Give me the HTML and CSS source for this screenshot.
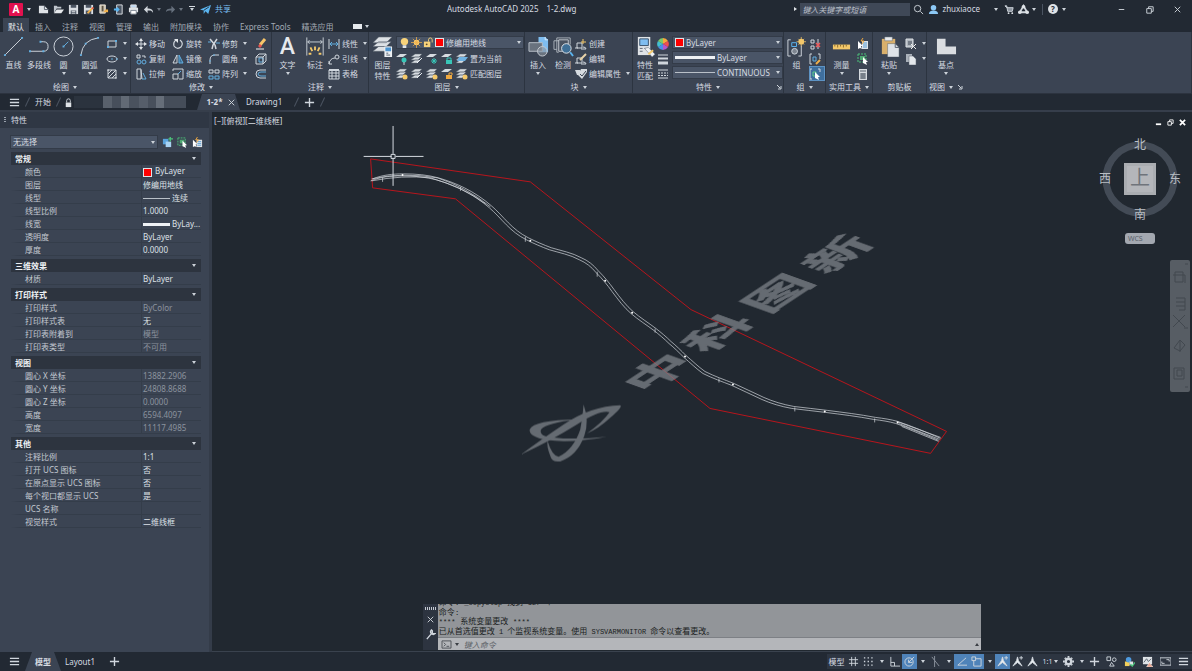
FILE: index.html
```html
<!DOCTYPE html>
<html lang="zh-CN">
<head>
<meta charset="utf-8">
<title>Autodesk AutoCAD 2025</title>
<link rel="stylesheet" href="styles.css">
</head>
<body>
<svg class="defs" aria-hidden="true">
  <symbol id="new" viewBox="0 0 12 12"><path d="M1 2h6l4 4v4H1z" fill="#dfe3e7" stroke="none"/><path d="M7 2v4h4" stroke="#59616e"/></symbol>
  <symbol id="open" viewBox="0 0 12 12"><path d="M1 10V2h3l1 1h4v2H4z" fill="#bfc5cc" stroke="none"/><path d="M4 6h8l-3 4H1z" fill="#e6e9ec" stroke="none"/></symbol>
  <symbol id="save" viewBox="0 0 12 12"><path d="M1 1h10v10H1z" fill="#d9dde2" stroke="none"/><path d="M3 1h6v3H3zM3 7h6v4H3z" fill="#4a5361" stroke="none"/><path d="M4 8h4M4 10h4" stroke="#e6e9ec"/></symbol>
  <symbol id="saveas" viewBox="0 0 12 12"><path d="M1 1h10v10H1z" fill="#d9dde2" stroke="none"/><path d="M3 1h6v3H3zM3 7h6v4H3z" fill="#4a5361" stroke="none"/><path d="M5 10l6-6" stroke="#f0b04b" stroke-width="2"/><path d="M10 4l1 1" stroke="#e55" stroke-width="2"/></symbol>
  <symbol id="webopen" viewBox="0 0 12 12"><path d="M2 1h6v9H2z" fill="#d0c6b4" stroke="#e6e0d4"/><path d="M4 2h2v6H4z" fill="#5b5344" stroke="none"/><path d="M6 9h5V6H8z" fill="#f0b04b" stroke="none"/></symbol>
  <symbol id="websave" viewBox="0 0 12 12"><path d="M4 1h6v10H4z" fill="#4c5664" stroke="#dfe3e7"/><path d="M1 6h5M4 4l2 2-2 2" stroke="#5bb5f0" stroke-width="2"/></symbol>
  <symbol id="print" viewBox="0 0 12 12"><path d="M1 4h10v5H1z" fill="#dfe3e7" stroke="none"/><path d="M3 1h6v3H3z" fill="#bcd8f2" stroke="#dfe3e7"/><path d="M3 7h6v4H3z" fill="#fff" stroke="#7b8490"/></symbol>
  <symbol id="undo" viewBox="0 0 12 12"><path d="M5 2L1 6l4 4V7c3 0 5 0 6 3 0-4-2-5-6-5z" fill="#cfd5db" stroke="none"/></symbol>
  <symbol id="redo" viewBox="0 0 12 12"><path d="M7 2l4 4-4 4V7C4 7 2 7 1 9c0-3 2-4 6-4z" fill="#66707d" stroke="none"/></symbol>
  <symbol id="plane" viewBox="0 0 12 12"><path d="M0 6l12-5-3 10-3-3-2 3V7z" fill="#5bb5f0" stroke="none"/><path d="M4 7l6-4" stroke="#26303b"/></symbol>
  <symbol id="search" viewBox="0 0 12 12"><circle cx="5" cy="5" r="3.500"/><path d="M8 8l3 3"/></symbol>
  <symbol id="user" viewBox="0 0 12 12"><circle cx="6" cy="4" r="3" fill="#8cc8f5" stroke="none"/><path d="M1 11q0-4 5-4t5 4z" fill="#8cc8f5" stroke="none"/></symbol>
  <symbol id="cart" viewBox="0 0 12 12"><path d="M1 2h2l1 6h5l1-4H3z" fill="#8d959f"/><circle cx="5" cy="10" r="1" fill="#dfe3e7" stroke="none"/><circle cx="9" cy="10" r="1" fill="#dfe3e7" stroke="none"/></symbol>
  <symbol id="appa" viewBox="0 0 12 12"><path d="M6 2L2 9h8z" stroke-width="2"/><circle cx="6" cy="3" r="2" fill="#dfe3e7" stroke="none"/><circle cx="2" cy="9" r="2" fill="#dfe3e7" stroke="none"/><circle cx="10" cy="9" r="2" fill="#dfe3e7" stroke="none"/></symbol>
  <symbol id="restore" viewBox="0 0 12 12"><path d="M3 5h5v5H3zM5 5V3h5v5H8"/></symbol>
  <symbol id="close" viewBox="0 0 12 12"><path d="M3 3l6 6M9 3l-6 6"/></symbol>
  <symbol id="min" viewBox="0 0 12 12"><path d="M3 6h6"/></symbol>
  <symbol id="menu" viewBox="0 0 12 12"><path d="M1 2.500h10M1 6h10M1 9.500h10" stroke-width="1.400"/></symbol>
  <symbol id="plus" viewBox="0 0 12 12"><path d="M6 1v10M1 6h10" stroke-width="1.500"/></symbol>
  <symbol id="lock" viewBox="0 0 12 12"><path d="M3 6h6v5H3z" fill="#dfe3e7" stroke="none"/><path d="M4 6V4q0-2 2-2t2 2v2"/></symbol>
  <symbol id="rect" viewBox="0 0 12 12"><path d="M2 3h8v6H2z"/><path d="M1 9h2M9 3h2" stroke="#62aee0" stroke-width="2"/></symbol>
  <symbol id="ell" viewBox="0 0 12 12"><ellipse cx="6" cy="6" rx="5" ry="3"/><path d="M5 6h2M11 5v2" stroke="#62aee0"/></symbol>
  <symbol id="hatch" viewBox="0 0 12 12"><path d="M2 2h8v8H2z"/><path d="M2 6l4-4M2 10l8-8M6 10l4-4M1 2h2M9 10h2"/></symbol>
  <symbol id="move" viewBox="0 0 12 12"><path d="M6 2v8M2 6h8"/><path d="M6 0l2 3H4zM6 12L4 9h4zM0 6l3-2v4zM12 6L9 4v4z" fill="#e3e7eb" stroke="none"/></symbol>
  <symbol id="rotate" viewBox="0 0 12 12"><path d="M4 2Q1 4 2 8q3 4 7 1 3-4-1-7" stroke-width="1.200"/><path d="M2 1h4v4z" fill="#e3e7eb" stroke="none"/></symbol>
  <symbol id="trim" viewBox="0 0 12 12"><path d="M2 1l5 6M9 1L5 7l-1 4M7 7l1 4" stroke-width="1.500"/><path d="M0 4h3M8 5h4" stroke="#62aee0"/></symbol>
  <symbol id="pencil" viewBox="0 0 12 12"><path d="M5 7l5-6" stroke="#f6c56a" stroke-width="3"/><path d="M3 8l2-2 2 2-2 2z" fill="#e85050" stroke="none"/><path d="M1 11h8" stroke="#f2f2f2"/></symbol>
  <symbol id="copy" viewBox="0 0 12 12"><circle cx="4" cy="9" r="2" stroke="#62aee0"/><circle cx="9" cy="9" r="2" stroke="#62aee0"/><path d="M2 2h3v3H2zM7 3h3v2" /></symbol>
  <symbol id="mirror" viewBox="0 0 12 12"><path d="M5 2v8H1z"/><path d="M7 2v8h4z" stroke="#62aee0" fill="#3c6c92"/></symbol>
  <symbol id="fillet" viewBox="0 0 12 12"><path d="M2 11V7q0-5 5-5h4"/><path d="M1 8h2M6 1v2" stroke="#62aee0"/></symbol>
  <symbol id="cube" viewBox="0 0 12 12"><path d="M1 4l3-3h7v7l-3 3H1z" /><path d="M4 5h4v4H4z" stroke="#62aee0"/><path d="M8 4l3-3M1 4h7v7"/></symbol>
  <symbol id="stretch" viewBox="0 0 12 12"><path d="M2 1h4v10H2zM7 11L6 2"/><path d="M8 5l3 6H7" stroke="#62aee0"/></symbol>
  <symbol id="scale" viewBox="0 0 12 12"><path d="M1 3V1h10v10H7"/><path d="M1 6h5v5H1z"/><path d="M6 6l3-3" stroke="#62aee0"/></symbol>
  <symbol id="array" viewBox="0 0 12 12"><path d="M1 2h4v3H1zM7 2h4v3H7z"/><path d="M1 8h4v3H1zM7 8h4v3H7z" stroke="#62aee0"/></symbol>
  <symbol id="offset" viewBox="0 0 12 12"><path d="M11 2H5Q1 2 1 6t4 4h6"/><path d="M11 4H6Q3 4 3 6t3 2h5" stroke="#62aee0"/></symbol>
  <symbol id="linear" viewBox="0 0 12 12"><path d="M1 1v10M11 1v10"/><path d="M2 6h8M4 4L2 6l2 2M8 4l2 2-2 2" stroke="#62aee0"/></symbol>
  <symbol id="leader" viewBox="0 0 12 12"><path d="M1 11q1-6 6-6"/><circle cx="9" cy="4" r="2"/><path d="M1 8v3h3" /></symbol>
  <symbol id="table" viewBox="0 0 12 12"><path d="M1 2h10v9H1zM1 5h10M1 8h10M4 2v9M8 2v9"/><path d="M1 2h10" stroke-width="2"/></symbol>
  <symbol id="lay" viewBox="0 0 12 12"><path d="M4 1h7L8 4H0zM4 4h6L7 7H0zM4 7h5L6 10H0z" fill="#d6dbe0" stroke="#59626f" stroke-width=".5"/></symbol>
  <symbol id="lay1" viewBox="0 0 12 12"><path d="M4 1h7L7 4H0z" fill="#d6dbe0" stroke="none"/><circle cx="8" cy="7" r="2.500" fill="#38c6b8" stroke="none"/><path d="M8 9v3"/></symbol>
  <symbol id="lay2" viewBox="0 0 12 12"><use href="#lay"/><path d="M6 10l5-5" stroke="#e8edf2"/></symbol>
  <symbol id="lay3" viewBox="0 0 12 12"><path d="M4 1h7L7 4H0z" fill="#d6dbe0" stroke="none"/><path d="M5 8h6M8 5v6M6 6l4 4M10 6l-4 4" stroke="#38c6b8"/></symbol>
  <symbol id="lay4" viewBox="0 0 12 12"><path d="M4 1h7L7 4H0z" fill="#d6dbe0" stroke="none"/><path d="M5 7h6v4H5z" fill="#38c6b8" stroke="none"/><path d="M6 7V5h4v2" stroke="#38c6b8"/></symbol>
  <symbol id="lay5" viewBox="0 0 12 12"><use href="#lay"/><path d="M3 4h9l-3 4H1z" fill="#6fb2e2" stroke="none"/></symbol>
  <symbol id="lay6" viewBox="0 0 12 12"><use href="#lay"/><circle cx="9" cy="9" r="2.500" fill="#f3c86a" stroke="none"/></symbol>
  <symbol id="lay7" viewBox="0 0 12 12"><path d="M4 1h7L7 4H0z" fill="#d6dbe0" stroke="none"/><path d="M5 7h6v4H5z" fill="#f0a940" stroke="none"/><path d="M8 7V5h3v2" stroke="#f0a940"/></symbol>
  <symbol id="bulb" viewBox="0 0 12 12"><circle cx="6" cy="5" r="4" fill="#f7d27a" stroke="none"/><path d="M4 9h4v3H4z" fill="#dfe3e7" stroke="none"/></symbol>
  <symbol id="sun" viewBox="0 0 12 12"><circle cx="6" cy="6" r="3" fill="#f7cd74" stroke="none"/><path d="M6 0v12M0 6h12M2 2l8 8M10 2l-8 8" stroke="#f0b04b" stroke-width=".8"/></symbol>
  <symbol id="unlock" viewBox="0 0 12 12"><path d="M1 5h7v6H1z" fill="#f7d27a" stroke="none"/><path d="M6 5V3q0-2 2-2t2 2v3" stroke="#f7d27a"/><circle cx="4" cy="8" r="1" fill="#59482a" stroke="none"/></symbol>
  <symbol id="blk" viewBox="0 0 12 12"><path d="M2 5h5v5H2zM0 10h3M8 9q3 0 3 2H6"/><path d="M8 1v5M6 4h5" stroke="#f3c86a"/></symbol>
  <symbol id="blk2" viewBox="0 0 12 12"><path d="M2 5h5v5H2zM0 10h3M8 9q3 0 3 2H6"/><path d="M5 7l6-6" stroke="#e8d2a8" stroke-width="2"/></symbol>
  <symbol id="blk3" viewBox="0 0 12 12"><path d="M0 2h5v5H2zM6 1h6v3L7 11 3 7z" fill="#d6dbe0" stroke="none"/><path d="M5 6l2 2 4-5" stroke="#3b4453"/></symbol>
  <symbol id="wheel" viewBox="0 0 12 12"><g stroke="none"><path d="M6 6V0a6 6 0 0 1 5 3z" fill="#f7a93b"/><path d="M6 6l5-3a6 6 0 0 1 0 6z" fill="#ef4f4f"/><path d="M6 6l5 3a6 6 0 0 1-5 3z" fill="#b556c9"/><path d="M6 6v6a6 6 0 0 1-5-3z" fill="#4b8fe8"/><path d="M6 6L1 9a6 6 0 0 1 0-6z" fill="#41bfd0"/><path d="M6 6L1 3a6 6 0 0 1 5-3z" fill="#7cc96a"/></g></symbol>
  <symbol id="weights" viewBox="0 0 12 12"><path d="M1 2h10" /><path d="M1 5.500h10" stroke-width="2"/><path d="M1 10h10" stroke-width="3"/></symbol>
  <symbol id="types" viewBox="0 0 12 12"><path d="M1 2h10M1 10h10"/><path d="M1 5h10M1 7.500h10" stroke-dasharray="2 1"/></symbol>
  <symbol id="ungroup" viewBox="0 0 12 12"><path d="M2 2h3v3H2zM2 8h3v3H2zM9 1v10"/><path d="M7 5l4 4M11 5L7 9" stroke="#ef5a5a" stroke-width="1.500"/></symbol>
  <symbol id="groupedit" viewBox="0 0 12 12"><path d="M3 1H1v10h2M9 1h2v5"/><path d="M4 4h3v4H4z" stroke="#62aee0"/><path d="M7 11l4-4" stroke="#f0b04b" stroke-width="2"/></symbol>
  <symbol id="groupsel" viewBox="0 0 12 12"><path d="M3 1H1v10h2M9 1h2v3"/><path d="M4 4h3v4H4z" stroke="#5fcf87"/><path d="M6 4l5 5H9l1 3-2-1-2-1z" fill="#fff" stroke="none"/></symbol>
  <symbol id="qsel" viewBox="0 0 12 12"><path d="M5 3h6v8H5z" fill="#dfe3e7" stroke="none"/><path d="M6 5h4M6 7h4M6 9h4" stroke="#5a9fd6"/><path d="M1 3l5 5H4l1 3-2-1-2 1z" fill="#fff" stroke="none"/><path d="M6 0L4 3h3L5 6" stroke="#f0a940"/></symbol>
  <symbol id="selall" viewBox="0 0 12 12"><path d="M1 1h8v8H1z" stroke="#4cc27a" stroke-dasharray="2 1"/><path d="M3 3h5v4H3z" fill="#4fa872" stroke="none"/><path d="M6 4l5 5H9l1 3-2-1-2-1z" fill="#fff" stroke="none"/></symbol>
  <symbol id="pick" viewBox="0 0 12 12"><path d="M1 2h6v6H1z" fill="#5aa3dc" stroke="none"/><path d="M4 5h6v6H4z" fill="#a8d2f2" stroke="none"/><path d="M9 0v5M7 2h5" stroke="#4cc27a" stroke-width="1.500"/></symbol>
  <symbol id="calc" viewBox="0 0 12 12"><path d="M2 1h8v11H2z" fill="#d6dbe0" stroke="none"/><path d="M3 3h6M3 6h6M3 8h6M3 10h6M5 5v6M7 5v6" stroke="#59626f"/></symbol>
  <symbol id="cut" viewBox="0 0 12 12"><path d="M1 1h7v8H1z" fill="#aeb5bd" stroke="#dfe3e7"/><path d="M3 4h4M3 6h4" stroke="#3b4453"/><path d="M6 6l5 5M11 6l-5 5" stroke="#eee"/></symbol>
  <symbol id="pages" viewBox="0 0 12 12"><path d="M1 1h6v8H1z" fill="#aab1ba" stroke="none"/><path d="M4 3h4l3 3v6H4z" fill="#e3e7eb" stroke="#59626f" stroke-width=".5"/></symbol>
  <symbol id="sgrid" viewBox="0 0 12 12"><path d="M4 1v10M8 1v10M1 4h10M1 8h10"/></symbol>
  <symbol id="sdots" viewBox="0 0 12 12"><path d="M1 2h10M1 6h10M1 10h10" stroke-dasharray="1.500 2.500" stroke-width="1.500"/></symbol>
  <symbol id="ortho" viewBox="0 0 12 12"><path d="M2 1v10h10M2 7h4v4"/></symbol>
  <symbol id="polar" viewBox="0 0 12 12"><circle cx="5.500" cy="6.500" r="4.500"/><path d="M5 7l6-6M5 7h4M5 4v3"/></symbol>
  <symbol id="iso" viewBox="0 0 12 12"><path d="M2 1l8 10M5 5V0M5 5v7" stroke="#8e96a1"/></symbol>
  <symbol id="track" viewBox="0 0 12 12"><path d="M11 2L2 10h10"/></symbol>
  <symbol id="snap" viewBox="0 0 12 12"><path d="M3 3h8v8H3z"/><path d="M1 1h4v4H1z" fill="#5184b8"/></symbol>
  <symbol id="ann" viewBox="0 0 12 12"><path d="M6 1l1 4 4 6-5-4-5 4 4-6z" fill="#eef1f4"/></symbol>
  <symbol id="ann2" viewBox="0 0 12 12"><use href="#ann"/><path d="M8 2h4M10 0v4"/></symbol>
  <symbol id="gear" viewBox="0 0 12 12"><circle cx="6" cy="6" r="3" stroke-width="2.500"/><path d="M6 0v2M6 10v2M0 6h2M10 6h2M2 2l1 1M9 9l1 1M10 2L9 3M3 9l-1 1" stroke-width="2"/></symbol>
  <symbol id="shapes" viewBox="0 0 12 12"><path d="M1 1h4v4H1zM4 11l2-4 3 4z"/><circle cx="9" cy="4" r="2"/></symbol>
  <symbol id="perf" viewBox="0 0 12 12"><path d="M1 6h5v5H1z" fill="#f1cf5a" stroke="none"/><circle cx="5" cy="4" r="3" fill="#4e9be0" stroke="none"/><path d="M6 6h4v4H6z" fill="#dfe3e7" stroke="none"/><path d="M7 9l2 2 3-4" stroke="#4cc27a" stroke-width="1.500"/></symbol>
  <symbol id="pic" viewBox="0 0 12 12"><path d="M1 1h10v8H1z" fill="#dfe3e7" stroke="none"/><path d="M2 7l3-4 2 3 3-3" stroke="#59626f"/><path d="M5 12l3-5 4 5z" fill="#e7a28c" stroke="#fff" stroke-width=".5"/></symbol>
  <symbol id="full" viewBox="0 0 12 12"><path d="M0 2h12v8H0z"/><path d="M7 4h3v2M5 8H2V6"/></symbol>
  <symbol id="wrench" viewBox="0 0 12 12"><path d="M2 11l5-6M7 1q-2 2 0 4t4 0l-3 0V2z" stroke-width="1.500"/></symbol>
  <symbol id="corner" viewBox="0 0 6 6"><path d="M1 1l3 3M5 2v3H2"/></symbol>
</svg>

<div class="app">
<header class="titlebar">
  <div class="quick">
    <button class="logo" aria-label="应用程序菜单">A</button><i class="dn"></i>
    <button aria-label="新建"><svg class="i"><use href="#new"/></svg></button>
    <button aria-label="打开"><svg class="i"><use href="#open"/></svg></button>
    <button aria-label="保存"><svg class="i"><use href="#save"/></svg></button>
    <button aria-label="另存为"><svg class="i"><use href="#saveas"/></svg></button>
    <button aria-label="从 Web 打开"><svg class="i"><use href="#webopen"/></svg></button>
    <button aria-label="保存到 Web"><svg class="i"><use href="#websave"/></svg></button>
    <button aria-label="打印"><svg class="i"><use href="#print"/></svg></button>
    <button class="hist" aria-label="放弃"><svg class="i"><use href="#undo"/></svg><i class="dn dim"></i></button>
    <button class="hist" aria-label="重做"><svg class="i"><use href="#redo"/></svg><i class="dn dim"></i></button>
    <i class="dn more"></i>
    <button class="share"><svg class="i"><use href="#plane"/></svg>共享</button>
  </div>
  <div class="doc"><span>Autodesk AutoCAD 2025</span><span>1-2.dwg</span></div>
  <div class="tools">
    <i class="rt"></i>
    <input class="find" type="text" placeholder="键入关键字或短语" aria-label="搜索">
    <button aria-label="搜索"><svg class="i"><use href="#search"/></svg></button>
    <button class="user"><svg class="i"><use href="#user"/></svg>zhuxiaoce</button><i class="dn"></i>
    <button aria-label="商店"><svg class="i"><use href="#cart"/></svg></button>
    <button aria-label="应用"><svg class="i"><use href="#appa"/></svg></button><i class="dn"></i>
    <i class="vr"></i>
    <button class="help" aria-label="帮助">?</button><i class="dn"></i>
    <div class="win">
      <button aria-label="最小化"><svg class="i"><use href="#min"/></svg></button>
      <button aria-label="还原"><svg class="i"><use href="#restore"/></svg></button>
      <button aria-label="关闭"><svg class="i"><use href="#close"/></svg></button>
    </div>
  </div>
</header>

<nav class="tabs">
  <button class="on">默认</button><button>插入</button><button>注释</button><button>视图</button><button>管理</button><button>输出</button><button>附加模块</button><button>协作</button><button>Express Tools</button><button>精选应用</button>
  <button class="collapse" aria-label="最小化面板"><b></b><i class="dn"></i></button>
</nav>

<section class="ribbon">
  <div class="panel">
    <div class="body draw">
      <button class="big"><svg viewBox="0 0 22 22"><path d="M2 20L20 2"/><path d="M1 19h2v2H1zM19 1h2v2h-2z" fill="#62aee0" stroke="none"/></svg>直线</button>
      <button class="big"><svg viewBox="0 0 22 22"><path d="M1 16h14q5 0 5-5t-5-5h-3"/><path d="M0 15h2v2H0zM11 5h2v2h-2zM14 15h2v2h-2z" fill="#62aee0" stroke="none"/></svg>多段线</button>
      <button class="big"><svg viewBox="0 0 22 22"><circle cx="11" cy="11" r="10"/><path d="M11 11l5-5" stroke="#62aee0"/><path d="M10 10h2v2h-2z" fill="#62aee0" stroke="none"/></svg>圆<i class="dn"></i></button>
      <button class="big"><svg viewBox="0 0 22 22"><path d="M2 20Q4 4 20 2"/><path d="M1 19h2v2H1zM6 7h2v2H6zM19 1h2v2h-2z" fill="#62aee0" stroke="none"/></svg>圆弧<i class="dn"></i></button>
      <div class="col">
        <button class="sb" aria-label="矩形"><svg class="i"><use href="#rect"/></svg><i class="dn"></i></button>
        <button class="sb" aria-label="椭圆"><svg class="i"><use href="#ell"/></svg><i class="dn"></i></button>
        <button class="sb" aria-label="图案填充"><svg class="i"><use href="#hatch"/></svg><i class="dn"></i></button>
      </div>
    </div>
    <div class="cap">绘图<i class="dn"></i></div>
  </div>
  <div class="panel">
    <div class="body modify">
      <div class="col">
        <button class="sb"><svg class="i"><use href="#move"/></svg>移动</button>
        <button class="sb"><svg class="i"><use href="#copy"/></svg>复制</button>
        <button class="sb"><svg class="i"><use href="#stretch"/></svg>拉伸</button>
      </div>
      <div class="col">
        <button class="sb"><svg class="i"><use href="#rotate"/></svg>旋转</button>
        <button class="sb"><svg class="i"><use href="#mirror"/></svg>镜像</button>
        <button class="sb"><svg class="i"><use href="#scale"/></svg>缩放</button>
      </div>
      <div class="col">
        <button class="sb"><svg class="i"><use href="#trim"/></svg>修剪<i class="dn"></i></button>
        <button class="sb"><svg class="i"><use href="#fillet"/></svg>圆角<i class="dn"></i></button>
        <button class="sb"><svg class="i"><use href="#array"/></svg>阵列<i class="dn"></i></button>
      </div>
      <div class="col">
        <button class="sb" aria-label="删除"><svg class="i"><use href="#pencil"/></svg></button>
        <button class="sb" aria-label="分解"><svg class="i"><use href="#cube"/></svg></button>
        <button class="sb" aria-label="偏移"><svg class="i"><use href="#offset"/></svg></button>
      </div>
    </div>
    <div class="cap">修改<i class="dn"></i></div>
  </div>
  <div class="panel">
    <div class="body annot">
      <button class="big"><span class="glyph">A</span>文字<i class="dn"></i></button>
      <button class="big"><svg viewBox="0 0 22 22"><path d="M2 1v20M20 1v20M3 6h16M5 4L3 6l2 2M17 4l2 2-2 2"/><path d="M11 11v4M6 12l2 4M16 12l-2 4M4 19h3M15 19h3" stroke="#f3c86a" stroke-width="2"/></svg>标注</button>
      <div class="col">
        <button class="sb"><svg class="i"><use href="#linear"/></svg>线性<i class="dn"></i></button>
        <button class="sb"><svg class="i"><use href="#leader"/></svg>引线<i class="dn"></i></button>
        <button class="sb"><svg class="i"><use href="#table"/></svg>表格</button>
      </div>
    </div>
    <div class="cap">注释<i class="dn"></i></div>
  </div>
  <div class="panel">
    <div class="body layers">
      <button class="big"><svg viewBox="0 0 22 22"><g fill="#dde1e5" stroke="#59626f" stroke-width=".6"><path d="M7 1h14l-6 6H1zM7 6h13l-5 5H1zM7 11h12l-4 5H1z"/></g><path d="M13 11h8v11h-8z" fill="#eef1f4" stroke="none"/><path d="M14 12h6v4h-6z" fill="#4b93cf" stroke="none"/><path d="M15 18h2M15 20h4" stroke="#59626f"/></svg>图层<br>特性</button>
      <div class="col">
        <div class="combo lcombo"><svg class="i"><use href="#bulb"/></svg><svg class="i"><use href="#sun"/></svg><svg class="i"><use href="#unlock"/></svg><b class="sw"></b><select aria-label="图层"><option>修编用地线</option></select><i class="dn"></i></div>
        <div class="lrow">
          <button aria-label="关"><svg class="i"><use href="#lay1"/></svg></button><button aria-label="隔离"><svg class="i"><use href="#lay2"/></svg></button><button aria-label="冻结"><svg class="i"><use href="#lay3"/></svg></button><button aria-label="锁定"><svg class="i"><use href="#lay4"/></svg></button><button class="sb"><svg class="i"><use href="#lay5"/></svg>置为当前</button>
        </div>
        <div class="lrow">
          <button aria-label="打开所有图层"><svg class="i"><use href="#lay6"/></svg></button><button aria-label="取消隔离"><svg class="i"><use href="#lay2"/></svg></button><button aria-label="解冻"><svg class="i"><use href="#lay6"/></svg></button><button aria-label="解锁"><svg class="i"><use href="#lay7"/></svg></button><button class="sb"><svg class="i"><use href="#lay6"/></svg>匹配图层</button>
        </div>
      </div>
    </div>
    <div class="cap">图层<i class="dn"></i></div>
  </div>
  <div class="panel">
    <div class="body block">
      <button class="big"><svg viewBox="0 0 22 22"><path d="M11 1h7l3 3v13H11z" fill="#7fbdf0" stroke="none"/><path d="M18 1v3h3" stroke="#d9ecfb"/><path d="M1 7h14v9H1z" fill="#69727e" stroke="#b9c0c8"/><circle cx="15" cy="16" r="5" fill="#8b939d" fill-opacity=".6" stroke="#c4cad1"/></svg>插入<i class="dn"></i></button>
      <button class="big"><svg viewBox="0 0 22 22"><path d="M4 14H1V5h13M6 17H4V2h14v7" stroke="#aab1ba"/><path d="M6 4h10v12H6z" fill="#4a5361" stroke="#c4cad1"/><circle cx="14" cy="13" r="5" fill="#3f6f96" stroke="#dfe3e7"/><path d="M18 17l3 4" stroke="#5bb5f0" stroke-width="2"/></svg>检测</button>
      <div class="col">
        <button class="sb"><svg class="i"><use href="#blk"/></svg>创建</button>
        <button class="sb"><svg class="i"><use href="#blk2"/></svg>编辑</button>
        <button class="sb"><svg class="i"><use href="#blk3"/></svg>编辑属性<i class="dn"></i></button>
      </div>
    </div>
    <div class="cap">块<i class="dn"></i></div>
  </div>
  <div class="panel">
    <div class="body props">
      <button class="big"><svg viewBox="0 0 22 22"><path d="M3 1h13v19H3z" fill="#dfe3e7" stroke="none"/><path d="M5 3h9v7H5z" fill="#7fbdf0" stroke="#39516a"/><path d="M5 13h3M5 16h3M10 13h3" stroke="#59626f"/><path d="M10 13l4-1 7 7-3 3z" fill="#eef1f4" stroke="#59626f" stroke-width=".5"/><path d="M14 19l5-4" stroke="#f3c86a" stroke-width="2"/></svg>特性<br>匹配</button>
      <div class="col">
        <button class="sb" aria-label="对象颜色"><svg class="i"><use href="#wheel"/></svg></button>
        <button class="sb" aria-label="线宽"><svg class="i"><use href="#weights"/></svg></button>
        <button class="sb" aria-label="线型"><svg class="i"><use href="#types"/></svg></button>
      </div>
      <div class="col">
        <div class="combo"><b class="sw"></b><select aria-label="对象颜色"><option>ByLayer</option></select><i class="dn"></i></div>
        <div class="combo"><b class="ln thick"></b><select aria-label="线宽"><option>ByLayer</option></select><i class="dn"></i></div>
        <div class="combo"><b class="ln"></b><select aria-label="线型"><option>CONTINUOUS</option></select><i class="dn"></i></div>
      </div>
    </div>
    <div class="cap">特性<i class="dn"></i><svg class="corner"><use href="#corner"/></svg></div>
  </div>
  <div class="panel">
    <div class="body group">
      <button class="big"><svg viewBox="0 0 22 22"><path d="M5 4H2v17h3M13 21h3V10"/><path d="M6 7h5v4H6z" stroke="#5bb5f0"/><circle cx="9" cy="16" r="3" fill="#7d8590"/><circle cx="16" cy="6" r="3" fill="#f3c86a" stroke="none"/><path d="M16 1v10M11 6h10M13 3l6 6M19 3l-6 6" stroke="#f3c86a" stroke-width=".8"/></svg>组</button>
      <div class="col">
        <button class="sb" aria-label="解除编组"><svg class="i"><use href="#ungroup"/></svg></button>
        <button class="sb" aria-label="组编辑"><svg class="i"><use href="#groupedit"/></svg></button>
        <button class="sb lit" aria-label="启用组选择"><svg class="i"><use href="#groupsel"/></svg></button>
      </div>
    </div>
    <div class="cap">组<i class="dn"></i></div>
  </div>
  <div class="panel">
    <div class="body util">
      <button class="big"><svg viewBox="0 0 22 22"><path d="M2 9h18v5H2z" fill="#f3c86a" stroke="none"/><path d="M4 9v2M7 9v3M10 9v2M13 9v3M16 9v2" stroke="#8a6a2a"/></svg>测量<i class="dn"></i></button>
      <div class="col">
        <button class="sb" aria-label="快速选择"><svg class="i"><use href="#qsel"/></svg></button>
        <button class="sb" aria-label="全部选择"><svg class="i"><use href="#selall"/></svg></button>
        <button class="sb" aria-label="计算器"><svg class="i"><use href="#calc"/></svg></button>
      </div>
    </div>
    <div class="cap">实用工具<i class="dn"></i></div>
  </div>
  <div class="panel">
    <div class="body clip">
      <button class="big"><svg viewBox="0 0 22 22"><path d="M3 3h14v16H3z" fill="#d9b06c" stroke="none"/><path d="M6 1h8v4H6z" fill="#e8ebee" stroke="#59626f" stroke-width=".5"/><path d="M9 8h8l4 4v10H9z" fill="#dfe3e7" stroke="#59626f" stroke-width=".5"/><path d="M17 8v4h4" stroke="#59626f"/></svg>粘贴<i class="dn"></i></button>
      <div class="col">
        <button class="sb" aria-label="剪切"><svg class="i"><use href="#cut"/></svg><i class="dn"></i></button>
        <button class="sb" aria-label="复制"><svg class="i"><use href="#pages"/></svg><i class="dn"></i></button>
      </div>
    </div>
    <div class="cap">剪贴板</div>
  </div>
  <div class="panel last">
    <div class="body view">
      <button class="big"><svg viewBox="0 0 22 22"><path d="M1 3h9v8h11v8H1z" fill="#dadde1" stroke="none"/></svg>基点<i class="dn"></i></button>
    </div>
    <div class="cap">视图<i class="dn"></i><svg class="cn"><use href="#corner"/></svg></div>
  </div>
</section>

<nav class="files">
  <button aria-label="菜单"><svg class="i"><use href="#menu"/></svg></button><i class="sl"></i>
  <button class="start">开始</button><i class="sl"></i>
  <button class="masked" aria-label="已锁定图形"><svg class="i"><use href="#lock"/></svg><b></b></button>
  <button class="cur"><span>1-2*</span><svg class="i"><use href="#close"/></svg></button>
  <button class="dwg">Drawing1</button><i class="sl"></i>
  <button aria-label="新图形"><svg class="i"><use href="#plus"/></svg></button><i class="sl"></i>
</nav>

<main class="work">
  <aside class="side">
    <h2><i class="grip"></i>特性</h2>
    <div class="pick">
      <div class="combo"><select aria-label="选择"><option>无选择</option></select><i class="dn"></i></div>
      <button aria-label="切换选择"><svg class="i"><use href="#pick"/></svg></button>
      <button aria-label="选择对象"><svg class="i"><use href="#selall"/></svg></button>
      <button aria-label="快速选择"><svg class="i"><use href="#qsel"/></svg></button>
    </div>
    <section class="grp"><h3>常规<i class="dn"></i></h3>
      <table>
        <tr><th>颜色</th><td><b class="sw"></b> ByLayer</td></tr>
        <tr><th>图层</th><td>修编用地线</td></tr>
        <tr><th>线型</th><td><b class="ln"></b>连续</td></tr>
        <tr><th>线型比例</th><td>1.0000</td></tr>
        <tr><th>线宽</th><td><b class="ln thick"></b>ByLay...</td></tr>
        <tr><th>透明度</th><td>ByLayer</td></tr>
        <tr><th>厚度</th><td>0.0000</td></tr>
      </table></section>
    <section class="grp"><h3>三维效果<i class="dn"></i></h3>
      <table><tr><th>材质</th><td>ByLayer</td></tr></table></section>
    <section class="grp"><h3>打印样式<i class="dn"></i></h3>
      <table>
        <tr><th>打印样式</th><td class="off">ByColor</td></tr>
        <tr><th>打印样式表</th><td>无</td></tr>
        <tr><th>打印表附着到</th><td class="off">模型</td></tr>
        <tr><th>打印表类型</th><td class="off">不可用</td></tr>
      </table></section>
    <section class="grp"><h3>视图<i class="dn"></i></h3>
      <table>
        <tr><th>圆心 X 坐标</th><td class="off">13882.2906</td></tr>
        <tr><th>圆心 Y 坐标</th><td class="off">24808.8688</td></tr>
        <tr><th>圆心 Z 坐标</th><td class="off">0.0000</td></tr>
        <tr><th>高度</th><td class="off">6594.4097</td></tr>
        <tr><th>宽度</th><td class="off">11117.4985</td></tr>
      </table></section>
    <section class="grp"><h3>其他<i class="dn"></i></h3>
      <table>
        <tr><th>注释比例</th><td>1:1</td></tr>
        <tr><th>打开 UCS 图标</th><td>否</td></tr>
        <tr><th>在原点显示 UCS 图标</th><td>否</td></tr>
        <tr><th>每个视口都显示 UCS</th><td>是</td></tr>
        <tr><th>UCS 名称</th><td></td></tr>
        <tr><th>视觉样式</th><td>二维线框</td></tr>
      </table></section>
  </aside>

  <div class="canvas">
    <svg class="scene" viewBox="212 112 980 540">
      <path class="bound" d="M370 159L530 182L691 310L947 432L931 454L710 409L455 199L372 188Z"/>
      <defs>
        <path id="road" d="M371 180C381 176 391 175 402 175C415 175 426 176 437 179C447 182 455 185 463 189C473 194 482 200 490 207C496 212 501 218 507 224C513 230 519 235 527 239C535 243 542 246 550 249C560 252 571 254 580 259C587 262 592 266 597 272C603 278 608 284 613 291C619 299 625 307 632 313C639 319 647 324 655 330C660 334 665 338 670 343C675 347 680 352 685 357C691 362 697 368 704 373C714 378 723 381 733 385C743 390 753 394 763 399C772 403 782 406 793 408C804 409 816 411 827 412C843 414 859 416 875 419C883 420 890 421 897 423C912 428 926 434 940 440"/>
      </defs>
      <g class="road"><use href="#road" x="1" y="-1"/><use href="#road" x="-1" y="1"/>
        <path d="M371 179Q402 172 437 178Q465 187 490 207M371 181Q402 175 430 178Q462 187 485 204M897 422L941 438M899 424L940 440M902 427L939 442" />
        <path d="M382 178v4M460 187v4M525 237v5M597 272v5M655 329v4M719 379v4M795 408v4M875 419v4"/></g>
      <g class="pin"><circle cx="402" cy="175" r="1"/><circle cx="530" cy="241" r="1"/><circle cx="605" cy="281" r="1"/><circle cx="632" cy="313" r="1"/><circle cx="685" cy="357" r="1"/><circle cx="733" cy="385" r="1"/><circle cx="825" cy="412" r="1"/><circle cx="898" cy="423" r="1"/></g>
      <g class="mark">
        <g class="name" transform="matrix(1 -.66 .72 .26 658 373)"><text x="0" y="18">中</text><text x="60" y="18">科</text><text x="120" y="18">图</text><text x="180" y="18">新</text></g>
        <g transform="translate(510 230) scale(.3333)">
          <path d="M290 622Q180 642 110 632Q55 622 58 600Q70 572 200 570Q110 580 92 600Q85 622 130 624Q190 632 290 622Z"/>
          <path d="M32 675Q100 625 160 585Q240 530 330 527Q340 530 300 565Q265 598 230 612Q280 575 298 548Q270 540 200 585Q120 635 32 675Z"/>
          <path d="M220 525Q238 575 222 620Q200 680 150 696Q125 700 120 680Q108 650 112 635Q125 680 145 682Q190 660 210 600Q218 560 220 525Z"/>
        </g>
      </g>
      <path class="cross" d="M363 156.500H391M395 156.500H423M392.500 126V154M392.500 158V186M390.500 154.500h4v4h-4z"/>
    </svg>
    <p class="vlabel">[−][俯视][二维线框]</p>
    <div class="vwin">
      <button aria-label="最小化"><svg viewBox="0 0 8 8"><path d="M1 6h6" stroke-width="2"/></svg></button>
      <button aria-label="还原"><svg viewBox="0 0 8 8"><path d="M1 3h4v4H1zM3 3V1h4v4H5"/></svg></button>
      <button aria-label="关闭"><svg viewBox="0 0 8 8"><path d="M1 1l6 6M7 1L1 7" stroke-width="2"/></svg></button>
    </div>
    <div class="vcube">
      <svg viewBox="0 -4 84 92">
        <circle cx="42" cy="42" r="34" fill="none" stroke="#434b56" stroke-width="7"/>
        <path d="M26 26h32v32H26z" fill="#aaadb1" stroke="none"/><path d="M29 29h26v26H29z" fill="#b4b6ba" stroke="none"/>
        <text class="up" x="42" y="48">上</text>
        <text x="42" y="12">北</text><text x="42" y="82">南</text><text x="7" y="46">西</text><text x="77" y="46">东</text>
      </svg>
      <button class="wcs">WCS</button>
    </div>
    <div class="navbar">
      <svg viewBox="0 0 20 132"><path d="M5 12h8v10H5zM3 15h12v8M6 42h9M6 46h9M6 38h9v12H9M3 55l12 12M15 55L3 67M14 68h4M10 80v12M4 88l6-8 5 5-5 6zM4 108h10v11H4zM7 110h5v6H7zM15 4h3M15 127h3"/></svg>
    </div>
    <div class="cmd">
      <div class="cmdbar"><i class="grip2"></i><button aria-label="关闭"><svg class="i"><use href="#close"/></svg></button><button aria-label="自定义"><svg class="i"><use href="#wrench"/></svg></button></div>
      <div class="cmdmain">
        <div class="log"><p>命令: <span>_copyclip</span> 找到 <span>127</span> 个</p><p>命令:</p><p><span>****</span> 系统变量更改 <span>****</span></p><p>已从首选值更改<span> 1 </span>个监视系统变量。使用<span> SYSVARMONITOR </span>命令以查看更改。</p></div>
        <div class="entry"><svg viewBox="0 0 12 10"><path d="M1 1h10v8H1zM3 3l2 2-2 2M6 7h3"/></svg><i class="dn dark"></i><input type="text" placeholder="键入命令" aria-label="键入命令"><i class="up"></i></div>
      </div>
    </div>
  </div>
</main>

<footer class="status">
  <div class="layouts">
    <button aria-label="菜单"><svg class="i"><use href="#menu"/></svg></button>
    <button class="model"><span>模型</span></button><button class="lay">Layout1</button>
    <button aria-label="新布局"><svg class="i"><use href="#plus"/></svg></button>
  </div>
  <div class="toggles">
    <button class="txt">模型</button>
    <button aria-label="栅格"><svg class="i"><use href="#sgrid"/></svg></button>
    <button aria-label="捕捉"><svg class="i"><use href="#sdots"/></svg></button><button class="ar" aria-label="捕捉选项"><i class="dn"></i></button>
    <button aria-label="正交"><svg class="i"><use href="#ortho"/></svg></button>
    <button class="on" aria-label="极轴"><svg class="i"><use href="#polar"/></svg></button><button class="ar" aria-label="极轴选项"><i class="dn"></i></button>
    <button aria-label="等轴测"><svg class="i"><use href="#iso"/></svg></button><button class="ar" aria-label="等轴测选项"><i class="dn"></i></button>
    <button class="on" aria-label="追踪"><svg class="i"><use href="#track"/></svg></button>
    <button class="on" aria-label="对象捕捉"><svg class="i"><use href="#snap"/></svg></button><button class="ar" aria-label="对象捕捉选项"><i class="dn"></i></button>
    <button class="on" aria-label="注释可见性"><svg class="i"><use href="#ann2"/></svg></button>
    <button aria-label="自动缩放"><svg class="i"><use href="#ann2"/></svg></button>
    <button aria-label="注释比例"><svg class="i"><use href="#ann"/></svg></button>
    <button class="txt ratio">1:1<i class="dn"></i></button>
    <button aria-label="工作空间"><svg class="i"><use href="#gear"/></svg></button><button class="ar" aria-label="工作空间选项"><i class="dn"></i></button>
    <button aria-label="注释监视器"><svg class="i"><use href="#plus"/></svg></button>
    <button class="wide" aria-label="隔离对象"><svg class="i"><use href="#shapes"/></svg></button>
    <button class="wide" aria-label="硬件加速"><svg class="i"><use href="#perf"/></svg></button>
    <button class="wide" aria-label="图像"><svg class="i"><use href="#pic"/></svg></button>
    <button class="wide" aria-label="全屏"><svg class="i"><use href="#full"/></svg></button>
    <button class="wide" aria-label="自定义"><svg class="i"><use href="#menu"/></svg></button>
  </div>
</footer>
</div>
</body>
</html>
```
FILE: styles.css
```css
*{box-sizing:border-box}
html,body{height:100%;margin:0}
body{font:8px/10px "Noto Sans","Noto Sans CJK SC",sans-serif;color:#d6dbe1;background:#222933;overflow:hidden}
button{font:inherit;color:inherit;background:none;border:0;padding:0;margin:0;display:flex;align-items:center;justify-content:center;white-space:nowrap}
p,h2,h3{margin:0;font:inherit}
.defs{position:absolute;width:0;height:0}
svg{fill:none;stroke:#d0d6dd;flex:none;display:block}
.i{width:11px;height:11px}
.dn{flex:none;width:0;height:0;border:2px solid transparent;border-top:3px solid #ccd2d9;border-bottom:0}
.dim{border-top-color:#6d7682}
.app{min-height:100vh;display:flex;flex-direction:column}

.titlebar{display:grid;grid-template-columns:448fr auto 617fr;align-items:center;height:18px}
.quick{display:flex;align-items:center;gap:4px;padding-left:9px}
.quick .dn{margin-right:3px}
.quick .dim{margin:0}
.hist{gap:3px}
.quick .more{margin:0 2px 0 3px;position:relative}
.more::before{content:"";position:absolute;left:-3px;top:-5px;width:6px;height:1px;background:#d6dbe1}
.logo{width:14px;height:13px;border-radius:1px;background:#e3114f;color:#fff;font-weight:700;font-size:10px}
.share{gap:4px;color:#79bdf0}
.doc{display:flex;gap:8px;white-space:nowrap}
.tools{display:flex;align-items:center;justify-content:flex-end}
.rt{border:2px solid transparent;border-left:3px solid #dfe3e7;border-right:0;margin-right:3px}
.find{width:110px;height:13px;border:0;padding:0 2px;background:#3f4857;color:#d6dbe1;font:italic 8px/12px "Noto Sans","Noto Sans CJK SC",sans-serif}
.find::placeholder,.entry input::placeholder{color:inherit;opacity:.8}
.find + button{margin:0 4px 0 3px}
.user{gap:3px;margin-right:14px}
.tools .dn{margin-right:6px}
.tools .dn + button{margin-right:3px}
.tools [aria-label="应用"]{margin-right:3px}
.vr{width:1px;height:11px;background:#4a5361;margin-right:5px}
.help{width:10px;height:10px;border-radius:50%;background:#dfe3e7;color:#222933;font-weight:700}
.tools .help{margin-right:4px}
.win{display:flex;gap:17px;padding:0 9px 0 44px}

.tabs{display:flex;height:14px;padding-left:3px;color:#a3abb5;align-items:stretch}
.tabs button{padding:4px 6px 0}
.tabs button:not(.on):not(.collapse){padding-right:5px}
.tabs .on{background:#3b4453;color:#e6e9ed;padding:4px 5px 0}
.tabs .collapse{margin-left:9px;gap:3px;padding-top:3px}
.collapse b{width:9px;height:5px;background:#e6e9ed}

.ribbon{display:flex;background:#3b4453;border-bottom:1px solid #2c333f;border-right:1px solid #2c333f}
.panel{display:flex;flex-direction:column;border-right:1px solid #2c3440;padding-top:4px}
.last{border-right:0}
.body{display:grid;height:45px;align-items:start}
.body .i{width:12px;height:12px}
.draw{grid-template-columns:27px 24px 25px 27px 27px}
.modify{grid-template-columns:37px 36px 47px 16px;padding-left:4px}
.annot{grid-template-columns:31px 24px 41px}
.layers{grid-template-columns:27px 128px}
.block{grid-template-columns:26px 24px 57px}
.props{grid-template-columns:24px 15px 111px}
.group{grid-template-columns:25px 16px}
.util{grid-template-columns:31px 15px}
.clip{grid-template-columns:32px 21px}
.view{grid-template-columns:38px}
.big{flex-direction:column;justify-content:flex-start;line-height:11px}
.big svg{width:21px;height:21px;margin-bottom:2px}
.annot .big svg{width:20px}
.big .dn{margin-top:2px}
.glyph{font:500 23px/21px Roboto,"Liberation Sans",sans-serif;color:#e6e9ed;margin-bottom:2px}
.col{display:flex;flex-direction:column;min-width:0}
.annot .col{padding-left:1px}
.sb{height:15px;gap:2px;justify-content:flex-start}
.body .sb .dn{margin-left:3px}
.draw .col{padding-left:3px}
.lit{background:#3f6f9d;outline:1px solid #5d93c4;outline-offset:-1px}
.cap{display:flex;align-items:center;justify-content:center;gap:4px;height:12px;position:relative;white-space:nowrap}
.corner,.cn{width:6px;height:6px}
.corner{position:absolute;right:1px}
.combo{display:flex;align-items:center;height:13px;margin-bottom:2px;background:#4a5567;border:1px solid #333b48;padding:0 2px;min-width:0}
.combo select{appearance:none;flex:1;min-width:0;border:0;background:none;color:inherit;font:inherit;padding:0 2px;height:11px}
.lcombo .i{width:11px;height:11px;margin-right:1px}
.sw{display:inline-block;flex:none;width:9px;height:9px;background:#f00;border:1px solid #dfe3e7;vertical-align:middle}
.ln{display:inline-block;flex:none;width:40px;height:1px;background:#b9c0c8;vertical-align:middle}
.thick{height:3px;background:#eef1f4}
.lrow{display:flex;align-items:center;height:15px;gap:3px}

.files{display:flex;align-items:center;height:18px;border-bottom:2px solid #363e4b;padding-left:9px}
.sl{width:1px;height:10px;background:#4b5461;transform:rotate(25deg);margin:0 7px}
.masked{margin-left:-3px}
.masked b{width:112px;height:12px;background:linear-gradient(90deg,#2b333e 0 26%,#59616c 26% 34%,#474f5b 34% 42%,#626a75 42% 49%,#4a525e 49% 58%,#565e6a 58% 66%,#48505c 66% 73%,#666e79 73% 80%,#454d59 80% 100%)}
.cur{align-self:stretch;margin-left:11px;width:43px;font-weight:700;gap:3px;background:#3b4453;clip-path:polygon(5px 0,38px 0,43px 100%,0 100%);padding-left:6px}
.dwg{margin-left:6px}
.dwg + .sl{margin-left:14px}

.work{flex:1;display:flex;min-height:0}
.side{width:212px;flex:none;background:#3b4453;border-right:3px solid #343c49}
.side h2{background:#2f3744;height:16px;display:flex;align-items:center;gap:5px;padding-left:4px}
.grip{width:2px;height:6px;background:repeating-linear-gradient(#9aa2ad 0 1px,#2f3744 1px 2px)}
.pick{display:flex;align-items:center;gap:4px;padding:7px 0 3px 10px}
.pick .combo{width:148px;height:14px;margin:0}
.pick .combo select{padding:0}
.grp{margin:0 8px 3px 11px}
.side h3{height:13px;background:#2d343f;display:flex;align-items:center;justify-content:space-between;padding:0 5px 0 4px;font-weight:700;color:#eef1f4}
.grp table{border-collapse:separate;border-spacing:0;table-layout:fixed;width:100%}
.grp tr{height:13px}
.grp th,.grp td{padding:0;line-height:11px;height:13px;border-bottom:1px solid #343d4a;overflow:hidden;white-space:nowrap;text-align:left;font-weight:400}
.grp th{width:130px;padding-left:4px;color:#c3c9d1;border-left:10px solid #3b4453}
.grp td{border-left:1px solid #343d4a;padding-left:1px;color:#dde1e6}
.grp .off{color:#8b939e}
.grp .ln{width:27px;margin-right:2px}
.grp .sw{margin-right:1px}

.canvas{flex:1;position:relative;background:#212830;min-width:0;border-bottom:1px solid #3a424e}
.scene{position:absolute;inset:0;width:100%;height:100%}
.bound{stroke:#b8151c}
.road{stroke:#d3d7dc;stroke-width:.7}
.pin{fill:#fff;stroke:none}
.mark{fill:#7d8288;stroke:none;opacity:.75}
.name{stroke:#7d8288;stroke-width:1}
.mark text{font:700 50px "Noto Sans CJK SC",sans-serif;text-anchor:middle}
.cross{stroke:#d6dbe1}
.vlabel{position:absolute;left:2px;top:4px}
.vwin{position:absolute;right:6px;top:7px;display:flex;gap:5px}
.vwin svg{width:7px;height:7px;stroke:#fff}
.vcube{position:absolute;right:10px;top:21px;width:84px;display:flex;flex-direction:column;align-items:center;gap:8px}
.vcube svg{width:84px;height:92px}
.vcube text{font:12px "Noto Sans CJK SC",sans-serif;fill:#b9bec4;stroke:none;text-anchor:middle}
.vcube .up{font-size:20px;fill:#6f747b}
.wcs{width:30px;height:11px;border-radius:3px;background:#a3a8b0;color:#5a616b;justify-content:flex-start;padding-left:3px;font-size:7px}
.navbar{position:absolute;right:2px;top:148px;width:20px;height:132px;background:#575d64;border-radius:2px}
.navbar svg{width:20px;height:132px;stroke:#42484f}
.cmd{position:absolute;left:21.5%;right:211px;bottom:1px;display:flex}
.cmdbar{width:15px;background:#2d3440;display:flex;flex-direction:column;align-items:center;gap:4px;padding-top:3px}
.grip2{width:11px;height:3px;background:repeating-linear-gradient(90deg,#c3c9d1 0 1px,#2d3440 1px 2px)}
.cmdmain{flex:1;min-width:0}
.log{height:33px;overflow:hidden;background:#929599;color:#1b1e22;font:8px/9px "Liberation Mono","Noto Sans CJK SC",monospace;display:flex;flex-direction:column;justify-content:flex-end;padding:0 1px}
.log p{flex:none;white-space:pre}
.log span{font-size:7px}
.entry{height:13px;background:#b4b6ba;display:flex;align-items:center;gap:3px;padding:0 2px 0 3px;border-top:1px solid #7d8085}
.entry svg{width:11px;height:9px;stroke:#4a4e54}
.dark{border-top-color:#3a3e44}
.entry input{flex:1;min-width:0;border:0;padding:0 2px;background:none;color:#4a4e54;font:italic 8px/11px "Noto Sans","Noto Sans CJK SC",sans-serif}
.entry .up{border:2px solid transparent;border-bottom:3px solid #3a3e44;border-top:0}

.status{display:flex;justify-content:space-between;height:19px}
.layouts{display:flex;align-items:stretch;padding-left:9px}
.model{margin-left:5px;width:36px;background:#3b4453;clip-path:polygon(7px 0,29px 0,36px 100%,0 100%);font-weight:700}
.lay{padding:0 14px 0 4px}
.toggles{display:flex;align-items:center}
.toggles button{width:15px;height:15px;background:#2d3541}
.toggles .ar{width:11px}
.toggles .on{background:#4f83b9}
.toggles .txt{width:19px}
.toggles .ratio{width:21px;gap:2px;font-size:7px}
.toggles .wide{width:18px}
```
